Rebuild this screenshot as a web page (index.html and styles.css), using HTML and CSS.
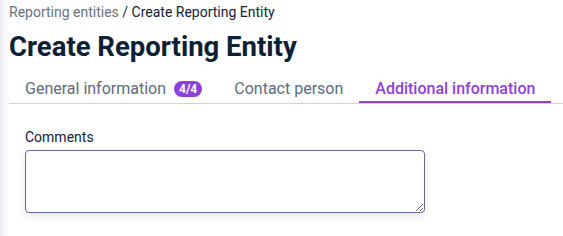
FILE: index.html
```html
<!DOCTYPE html>
<html>
<head>
	<title>Create Reporting Entity</title>
	<link rel="stylesheet" href="styles.css">
</head>
<body>
	<div class="page">
		<div class="breadcrumb">
			<a href="#">Reporting entities</a> / <span>Create Reporting Entity</span>
		</div>
		<h1>Create Reporting Entity</h1>
		<div class="tabs">
			<div class="tab">General information <span class="badge">4/4</span></div>
			<div class="tab">Contact person</div>
			<div class="tab active">Additional information</div>
		</div>
		<form>
			<div class="form-group">
				<label for="comments">Comments</label>
				<textarea id="comments" name="comments"></textarea>
			</div>
		</form>
	</div>
</body>
</html>
```

FILE: styles.css
```css
body {
	margin: 0;
	font-family: Roboto, "Liberation Sans", sans-serif;
	color: #0f2337;
	background: #fff;
}

.page {
	min-height: 236px;
	padding: 3px 0 0 9px;
	background: linear-gradient(to right, #ececf0 0, #f7f7f9 4px, #fff 9px);
}

.breadcrumb {
	font-size: 14px;
	line-height: 18px;
	color: #0f2337;
}

.breadcrumb a {
	color: #6b717c;
	text-decoration: none;
}

h1 {
	margin: 8px 0 0;
	font-size: 27.5px;
	line-height: 36px;
	font-weight: 700;
	color: #0d2135;
}

.tabs {
	display: flex;
	margin-top: 10px;
	border-bottom: 1px solid #cfd0dc;
}

.tab {
	display: flex;
	align-items: center;
	gap: 8px;
	padding: 4px 16px 4px;
	font-size: 16px;
	line-height: 19px;
	color: #5d6b80;
	border-bottom: 2px solid transparent;
	margin-bottom: -1px;
}

.tab.active {
	color: #8e3fdc;
	font-weight: 500;
	border-bottom-color: #8e3fdc;
	padding-bottom: 3px;
	margin-bottom: 0;
}

.badge {
	background: #8e3fdc;
	color: #fff;
	font-size: 12px;
	font-weight: 700;
	line-height: 16px;
	padding: 0 5px;
	border-radius: 8px;
}

form {
	padding: 24px 0 0 16px;
}

.form-group {
	display: flex;
	flex-direction: column;
}

.form-group label {
	font-size: 14px;
	line-height: 18px;
	margin-bottom: 4px;
	color: #0f2337;
}

.form-group textarea {
	width: 400px;
	height: 63px;
	box-sizing: border-box;
	border: 1px solid #676d9a;
	border-radius: 4px;
	box-shadow: 0 3px 8px rgba(40, 40, 80, 0.12);
	font-family: inherit;
	font-size: 14px;
	resize: vertical;
}
```
